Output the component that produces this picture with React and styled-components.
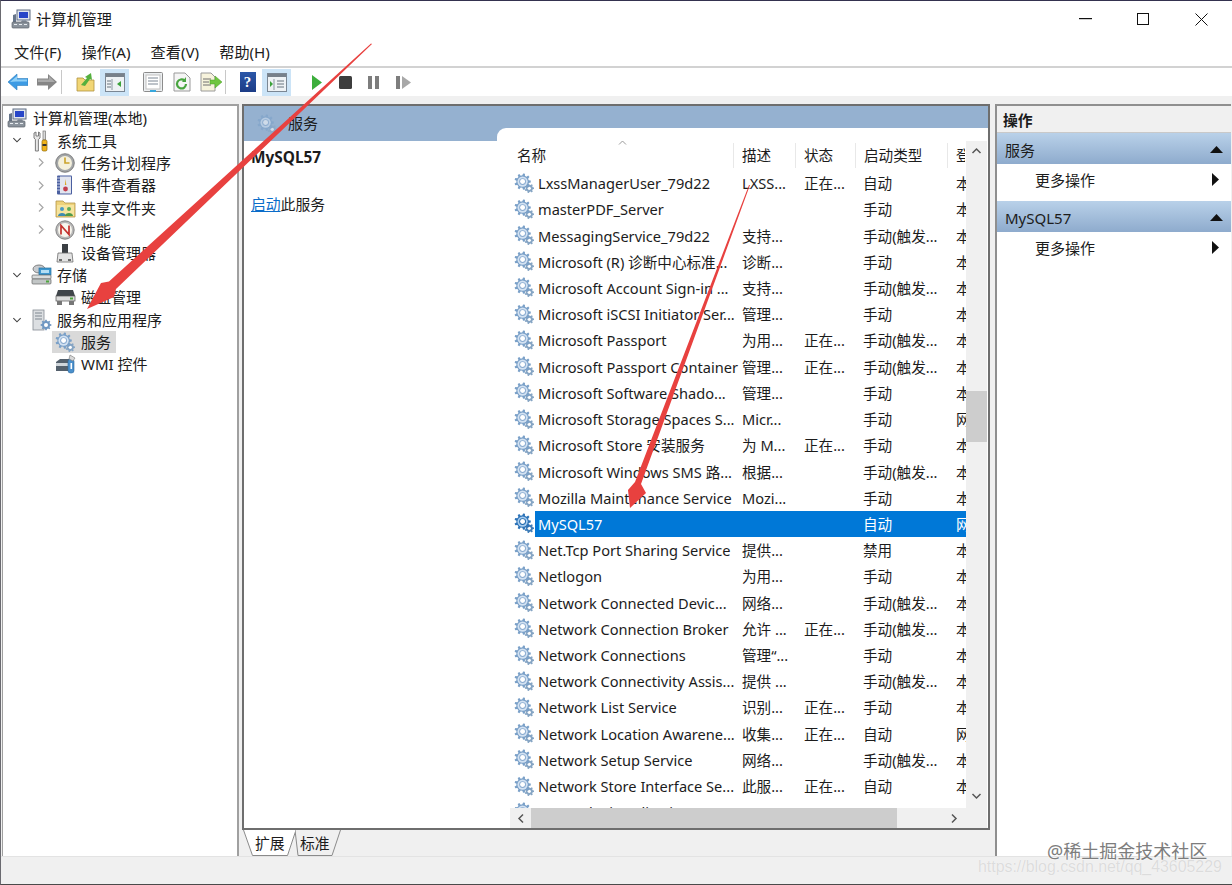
import React from "react";
import styled, { createGlobalStyle } from "styled-components";

const FONT = `"Noto Sans", "Noto Sans CJK SC", sans-serif`;

const Global = createGlobalStyle`
  html, body { margin: 0; padding: 0; background: #fff; }
  body { width: 1232px; height: 885px; overflow: hidden; font-family: ${FONT}; color: #1c1c1c; }
  * { box-sizing: border-box; }
`;

const Win = styled.div`
  position: relative; width: 1232px; height: 885px; display: flex; flex-direction: column;
  background: #fff; border-top: 1px solid #34324f; border-bottom: 1px solid #4a4a4a; border-left: 1px solid #6a6a70;
  overflow: hidden; font-size: 15.2px; line-height: 20px;
`;
const TitleBar = styled.div`
  height: 36px; display: flex; align-items: center; padding-left: 10px; flex: none;
`;
const TitleText = styled.span` margin-left: 5px; font-size: 15.2px; `;
const WinControls = styled.div` margin-left: auto; display: flex; padding-right: 2px; `;
const WinBtn = styled.div` width: 58px; height: 36px; display: flex; align-items: center; justify-content: center; `;
const MenuBar = styled.div`
  height: 28px; flex: none; display: flex; gap: 20px; padding: 1px 0 0 13px; align-items: center;
  font-size: 15.2px; border-bottom: 2px solid #d2d2d2; box-sizing: content-box;
`;
const Toolbar = styled.div`
  height: 28px; flex: none; display: flex; align-items: center; padding-left: 2px; background: #fff;
`;
const ToolBtn = styled.div`
  width: ${p => p.$w || 29}px; height: 27px; flex: none; display: flex; align-items: center; justify-content: center;
  margin-left: ${p => p.$ml || 0}px;
  background: ${p => (p.$on ? "#cce4f7" : "transparent")};
`;
const ToolSep = styled.div` width: 1px; height: 24px; background: #c8c8c8; flex: none; `;

const Main = styled.div`
  flex: 1; min-height: 0; background: #f0f0f0; padding: 8px 0 0 1px; display: flex; align-items: flex-start;
`;
const TreePane = styled.div`
  width: 237px; height: 752px; flex: none; background: #fff;
  border: 2px solid #a0a0a0; border-left-width: 1px; border-bottom: none; padding-top: 1px;
`;
const TreeRow = styled.div`
  height: 22.4px; display: flex; align-items: center; position: relative;
  padding-left: ${p => p.$indent}px; white-space: nowrap;
`;
const Chevron = styled.span`
  width: 10px; height: 14px; display: flex; align-items: center; justify-content: center;
  position: absolute; left: ${p => p.$x}px; top: 4px;
`;
const IconSlot = styled.span` width: 22px; flex: none; display: flex; align-items: center; justify-content: center; `;
const TreeLabel = styled.span`
  margin-left: 3px; padding: 0 2px; line-height: 22px; font-size: 15px;
`;
const SelectedTree = styled.div`
  display: flex; align-items: center; height: 22.4px; background: #d9d9d9; padding: 0 3px 0 2px; margin-left: -2px;
`;

const CenterCol = styled.div`
  width: 748px; margin-left: 3px; flex: none; display: flex; flex-direction: column;
`;
const CenterPane = styled.div`
  height: 726px; border: 2px solid #6e6e6e; background: #fff;
  display: flex; flex-direction: column; overflow: hidden;
`;
const PaneHead = styled.div`
  height: 35px; flex: none; background: #95b1d0; display: flex; align-items: flex-start; padding: 8px 0 0 13px;
  font-size: 15px;
`;
const PaneHeadLabel = styled.span` margin-left: 10px; line-height: 19px; `;
const PaneBody = styled.div` flex: 1; min-height: 0; display: flex; `;
const Desc = styled.div` width: 253px; flex: none; padding: 7px 0 0 7px; `;
const DescTitle = styled.div` font-weight: 700; font-size: 15.4px; line-height: 20px; `;
const DescLine = styled.div` margin-top: 26px; font-size: 14.8px; `;
const Link = styled.span` color: #0a6cc9; text-decoration: underline; `;

const ListArea = styled.div`
  flex: 1; min-width: 0; margin-top: -13px; background: #fff; border-top-left-radius: 9px;
  display: flex; flex-direction: column; position: relative; z-index: 1; overflow: hidden;
`;
const ListTop = styled.div` flex: 1; min-height: 0; display: flex; `;
const ListCols = styled.div` width: 469px; flex: none; display: flex; flex-direction: column; overflow: hidden; `;
const HeadRow = styled.div`
  height: 42px; flex: none; padding: 15px 0 0 14px; display: flex; position: relative; overflow: hidden;
`;
const HeadCell = styled.div`
  width: ${p => p.$w}px; flex: none; height: 25px; padding-left: ${p => p.$pl ?? 8}px; line-height: 24px;
  border-right: 1px solid ${p => (p.$noline ? "transparent" : "#e8e8e8")}; white-space: nowrap; overflow: hidden; font-size: 14.6px;
`;
const SortCaret = styled.span` position: absolute; left: 121px; top: 12px; display: flex; `;
const Rows = styled.div` flex: 1; min-height: 0; overflow: hidden; padding-left: 14px; `;
const Row = styled.div` height: 26.22px; display: flex; align-items: center; `;
const RowIcon = styled.div` width: 24px; flex: none; display: flex; align-items: center; padding-left: 3px; `;
const RowBody = styled.div`
  flex: 1; min-width: 0; height: 100%; display: grid; grid-template-columns: 206px 62px 60px 92px 11px; align-items: center;
  background: ${p => (p.$sel ? "#0078d7" : "transparent")}; color: ${p => (p.$sel ? "#fff" : "#1c1c1c")};
`;
const Cell = styled.div`
  padding-left: ${p => p.$pl ?? 1}px; white-space: nowrap; overflow: hidden; font-size: 14.6px; line-height: 26px;
`;
const VScroll = styled.div`
  width: 21px; flex: none; margin-top: 13px; background: #f0f0f0; position: relative;
  display: flex; flex-direction: column; align-items: center; padding: 6px 0 28px;
`;
const VThumb = styled.div`
  position: absolute; left: 0; right: 0; top: 250px; height: 51px; background: #cdcdcd;
`;
const DownSlot = styled.div` margin-top: auto; display: flex; `;
const HScroll = styled.div`
  height: 20px; flex: none; margin-left: 13px; margin-right: 0; background: #f0f0f0; display: flex; align-items: center;
`;
const HArrow = styled.div` width: 21px; flex: none; display: flex; align-items: center; justify-content: center; `;
const HThumb = styled.div` width: 366px; height: 20px; background: #cdcdcd; flex: none; `;
const HArrowRight = styled(HArrow)` margin-left: 46px; `;

const TabStrip = styled.div` height: 26px; display: flex; padding-left: 1px; `;
const Tab = styled.div`
  position: relative; width: ${p => p.$w}px; height: 26px; margin-left: ${p => p.$ml || 0}px; flex: none;
  padding-left: ${p => p.$pl}px; line-height: 26px; font-size: 14.8px;
`;
const TabShape = styled.svg` position: absolute; left: 0; top: 0; z-index: 0; `;
const TabText = styled.span` position: relative; `;

const ActionPane = styled.div`
  width: 236px; margin-left: 5px; height: 752px; flex: none; background: #fff;
  border-top: 2px solid #8f8f8f; border-left: 2px solid #8f8f8f;
`;
const ActionTitle = styled.div`
  height: 26px; background: #f0f0f0; font-weight: 700; padding-left: 6px; line-height: 28px; font-size: 14.8px;
  border-bottom: 1px solid #c9c9c9; box-sizing: content-box;
`;
const ActionHead = styled.div`
  height: 31px; display: flex; align-items: center; justify-content: space-between; padding: 2px 8px 0 8px;
  background: linear-gradient(#b9d1e9, #8eabcd); font-size: 15px;
`;
const ActionItem = styled.div`
  height: 33px; display: flex; align-items: center; justify-content: space-between;
  padding: 0 12px 2px 38px; margin-bottom: ${p => p.$mb || 0}px; font-size: 15px;
`;
const StatusBar = styled.div` height: 28px; flex: none; background: #f0f0f0; border-top: 1px solid #e3e3e3; position: relative; z-index: 2; `;

const Overlay = styled.svg` position: absolute; left: -1px; top: -1px; z-index: 5; pointer-events: none; `;
const Mark1 = styled.div`
  position: absolute; left: 1046px; top: 838px; z-index: 6; font-size: 18px; line-height: 24px; color: #7d7d7d; white-space: nowrap;
  text-shadow: 0 0 2px #fff, 0 0 1px #fff;
`;
const Mark2 = styled.div`
  position: absolute; left: 977px; top: 856px; z-index: 6; font-family: "Liberation Sans", sans-serif; font-size: 15.9px; line-height: 20px; color: #dcdcdc; white-space: nowrap;
  text-shadow: 0 0 1px #fff;
`;

/* ---------- icons ---------- */
function gearPath(cx, cy, r, teeth) {
  const pts = [];
  const ro = r, ri = r * 0.76;
  for (let i = 0; i < teeth; i++) {
    const a = (i / teeth) * Math.PI * 2, s = (Math.PI * 2) / teeth;
    [[-0.3, ri], [-0.17, ro], [0.17, ro], [0.3, ri]].forEach(([k, rr]) => {
      pts.push(`${(cx + rr * Math.cos(a + k * s)).toFixed(2)},${(cy + rr * Math.sin(a + k * s)).toFixed(2)}`);
    });
  }
  return pts.join(" ");
}
const G1 = gearPath(9, 9, 8.6, 9);
const G2 = gearPath(16, 16, 5, 7);

const Gear = ({ size = 22, strong, faint }) => (
  <svg width={size} height={size} viewBox="0 0 22 22" style={{ opacity: faint ? 0.55 : 1, flex: "none" }}>
    <polygon points={G2} fill={strong ? "#3f7db8" : "#86a5c4"} />
    <circle cx="16" cy="16" r="1.7" fill="#fff" />
    <polygon points={G1} fill={strong ? "#2d73b8" : "#7aa0c8"} />
    <circle cx="9" cy="9" r="5.4" fill={strong ? "#a8cdef" : "#d3e2f2"} />
    <circle cx="9" cy="9" r="3.6" fill={strong ? "#1f68ad" : "#8aabd0"} />
    <circle cx="9" cy="9" r="2.6" fill="#fff" />
  </svg>
);
const Computer = ({ size = 20 }) => (
  <svg width={size} height={size} viewBox="0 0 20 20" style={{ flex: "none" }}>
    <rect x="6" y="1" width="13" height="10" fill="#dfe5ee" stroke="#5f6d82" />
    <rect x="8" y="3" width="9" height="6" fill="#2746c8" />
    <path d="M11 11h4l1 2h-6z" fill="#8c96a4" />
    <path d="M2 6l3-1v8H2z" fill="#66758a" />
    <rect x="1" y="13" width="17" height="6" rx="1" fill="#8b939c" stroke="#5c636b" strokeWidth=".7" />
    <path d="M3 15.5h3M8 15.5h3M13 15.5h3" stroke="#e9edf1" />
  </svg>
);
const Tools = () => (
  <svg width="20" height="22" viewBox="0 0 20 22" style={{ flex: "none" }}>
    <path d="M3 3v5l1.4 1.5V21h3V9.5L9 8V3L7.500 2v4h-2.500V2z" fill="#e8e8e8" stroke="#6f6f6f" strokeWidth=".9" />
    <rect x="12" y="1" width="2.600" height="9" fill="#d9d9d9" stroke="#777" strokeWidth=".7" />
    <rect x="11" y="10" width="5" height="11" rx="1.500" fill="#f0b41c" stroke="#8a6508" strokeWidth=".7" />
    <rect x="11.500" y="14" width="4" height="2" fill="#333" />
  </svg>
);
const Clock = () => (
  <svg width="20" height="20" viewBox="0 0 20 20" style={{ flex: "none" }}>
    <circle cx="10" cy="10" r="9.300" fill="#a3a6a8" stroke="#6c6c6c" strokeWidth=".8" />
    <circle cx="10" cy="10" r="7" fill="#f4f0dc" />
    <path d="M10 4.500V10h4.500" fill="none" stroke="#caa22a" strokeWidth="1.600" />
  </svg>
);
const EventBook = () => (
  <svg width="20" height="20" viewBox="0 0 20 20" style={{ flex: "none" }}>
    <rect x="2" y="0.500" width="15" height="19" rx="1" fill="#4a5fa0" />
    <rect x="5" y="1.500" width="11" height="17" fill="#e2e5ef" />
    <path d="M2 3h3M2 6h3M2 9h3M2 12h3M2 15h3" stroke="#c8d0e6" />
    <path d="M10.500 4l-.6 6h1.400z" fill="#dca41c" />
    <circle cx="10.500" cy="14" r="2.400" fill="#c23d4d" />
  </svg>
);
const SharedFolder = () => (
  <svg width="21" height="20" viewBox="0 0 21 20" style={{ flex: "none" }}>
    <path d="M1 3h7l2 2h10v14H1z" fill="#eed27a" stroke="#b2944a" strokeWidth=".8" />
    <rect x="2" y="7" width="17" height="11" fill="#f6e49e" />
    <circle cx="7" cy="11" r="2" fill="#4a9ac4" />
    <path d="M3 18c0-4 8-4 8 0z" fill="#3e8ab0" />
    <circle cx="14" cy="11" r="2" fill="#5cab58" />
    <path d="M10 18c0-4 8-4 8 0z" fill="#4d9a4a" />
  </svg>
);
const Perf = () => (
  <svg width="20" height="20" viewBox="0 0 20 20" style={{ flex: "none" }}>
    <circle cx="10" cy="10" r="9.200" fill="#b8b8b8" stroke="#707070" strokeWidth=".8" />
    <circle cx="10" cy="10" r="7" fill="#f8f6ee" />
    <path d="M6 14.500V5.500l8 9V5.500" fill="none" stroke="#c4302c" strokeWidth="1.700" />
  </svg>
);
const Device = () => (
  <svg width="20" height="20" viewBox="0 0 20 20" style={{ flex: "none" }}>
    <rect x="7" y="1" width="6" height="9" fill="#3b3f44" />
    <path d="M3 10h14l1 9H2z" fill="#e4e4e4" stroke="#6d6d6d" strokeWidth=".8" />
    <rect x="4" y="16" width="3" height="2" fill="#6d6d6d" />
    <rect x="13" y="16" width="3" height="2" fill="#6d6d6d" />
  </svg>
);
const Storage = () => (
  <svg width="21" height="21" viewBox="0 0 21 21" style={{ flex: "none" }}>
    <ellipse cx="8" cy="5" rx="6" ry="4" fill="#c7cbcf" stroke="#666" strokeWidth=".8" />
    <rect x="8" y="4" width="12" height="7" fill="#3d97cf" stroke="#2a6f9c" strokeWidth=".7" />
    <rect x="10" y="6" width="8" height="3" fill="#b3def4" />
    <rect x="1" y="11" width="19" height="4" rx="1" fill="#d9dcdc" stroke="#666" strokeWidth=".7" />
    <rect x="1" y="15" width="19" height="5" rx="1" fill="#c2c6c6" stroke="#666" strokeWidth=".7" />
    <rect x="15" y="16.500" width="3" height="2" fill="#4ea53d" />
  </svg>
);
const Disk = () => (
  <svg width="21" height="20" viewBox="0 0 21 20" style={{ flex: "none" }}>
    <path d="M3 3h15l2 6H1z" fill="#40454a" />
    <rect x="1" y="9" width="19" height="5" fill="#dcdcdc" stroke="#555" strokeWidth=".7" />
    <rect x="15" y="10.500" width="3" height="2" fill="#4ea53d" />
    <rect x="2" y="14" width="5" height="4" fill="#777" />
    <rect x="14" y="14" width="5" height="4" fill="#777" />
  </svg>
);
const AppServer = () => (
  <svg width="21" height="22" viewBox="0 0 21 22" style={{ flex: "none" }}>
    <rect x="2" y="1" width="11" height="20" fill="#dcdfe2" stroke="#848b93" strokeWidth=".8" />
    <path d="M4 4h7M4 7h7M4 10h7" stroke="#7f8790" />
    <polygon points={gearPath(15, 16, 5.400, 8)} fill="#6f97c2" />
    <circle cx="15" cy="16" r="2" fill="#fff" />
  </svg>
);
const Wmi = () => (
  <svg width="21" height="20" viewBox="0 0 21 20" style={{ flex: "none" }}>
    <path d="M1 8l4-3h9v12H1z" fill="#54606c" />
    <rect x="1" y="9" width="13" height="3" fill="#cfd5da" />
    <rect x="13" y="5" width="6" height="14" rx="2.500" fill="#4a90cc" stroke="#2a659c" strokeWidth=".6" />
    <path d="M15 1l5 3-2 3-4-2z" fill="#d8d8d8" stroke="#777" strokeWidth=".6" />
    <rect x="15.500" y="9" width="1.600" height="6" fill="#fff" />
  </svg>
);

const ChevRight = () => (
  <svg width="8" height="11" viewBox="0 0 8 11"><path d="M2 1.500l4 4-4 4" fill="none" stroke="#a6a6a6" strokeWidth="1.200" /></svg>
);
const ChevDown = () => (
  <svg width="11" height="8" viewBox="0 0 11 8"><path d="M1.500 2l4 4 4-4" fill="none" stroke="#404040" strokeWidth="1.200" /></svg>
);
const Caret = ({ d, color = "#555" }) => (
  <svg width="11" height="8" viewBox="0 0 11 8" style={{ flex: "none" }}>
    <path d={d === "up" ? "M1.500 6l4-4 4 4" : "M1.500 2l4 4 4-4"} fill="none" stroke={color} strokeWidth="1.500" />
  </svg>
);
const CaretH = ({ d }) => (
  <svg width="8" height="11" viewBox="0 0 8 11" style={{ flex: "none" }}>
    <path d={d === "l" ? "M6 1.500l-4 4 4 4" : "M2 1.500l4 4-4 4"} fill="none" stroke="#555" strokeWidth="1.500" />
  </svg>
);
const TriUp = () => <svg width="13" height="7" viewBox="0 0 13 7" style={{ flex: "none" }}><path d="M0 7L6.500 0 13 7z" fill="#111" /></svg>;
const TriRight = () => <svg width="7" height="13" viewBox="0 0 7 13" style={{ flex: "none" }}><path d="M0 0l7 6.500L0 13z" fill="#111" /></svg>;

/* toolbar icons */
const IconBack = () => (
  <svg width="20" height="18" viewBox="0 0 20 18"><path d="M0 9l9-8v4.500h11v7H9V17z" fill="#3d9be4" stroke="#2f7fbf" strokeWidth=".6" /><path d="M2 9l7-6v3.500h10v2H8z" fill="#8fd0f7" /></svg>
);
const IconForward = () => (
  <svg width="20" height="18" viewBox="0 0 20 18"><path d="M20 9l-9-8v4.500H0v7h11V17z" fill="#868686" /><path d="M1 6.500h11V3l6 6H1z" fill="#aaa" /></svg>
);
const IconUp = () => (
  <svg width="19" height="20" viewBox="0 0 19 20">
    <path d="M1 6h6l2 2h9v11H1z" fill="#f2d675" stroke="#b0923f" strokeWidth=".8" />
    <path d="M5 13l6-7-2-1 6-4 1 7-2-1-5 7z" fill="#55b03e" />
  </svg>
);
const IconPane = ({ right }) => (
  <svg width="20" height="19" viewBox="0 0 20 19">
    <rect x=".5" y=".5" width="19" height="18" fill="#eef2f5" stroke="#7b8794" />
    <rect x="1" y="1" width="18" height="3" fill="#77808a" />
    <path d="M7 6v11" stroke="#8a96a2" />
    <path d={right ? "M3 8l3 3-3 3z" : "M16 8l-4 3 4 3z"} fill="#3ba23a" />
    {right ? <path d="M10 8h7M10 11h7M10 14h7" stroke="#68747f" /> : <path d="M2 8h4M2 11h4M2 14h4" stroke="#68747f" />}
  </svg>
);
const IconProps = () => (
  <svg width="20" height="21" viewBox="0 0 20 21">
    <rect x=".5" y=".5" width="19" height="19" rx="1" fill="#eceff1" stroke="#8c8c8c" />
    <rect x="3" y="3" width="14" height="14" fill="#fff" stroke="#c0c0c0" />
    <path d="M5 6h10M5 9h10M5 12h10" stroke="#7c8794" />
    <rect x="7" y="18" width="6" height="2" fill="#38a7dc" />
  </svg>
);
const IconRefresh = () => (
  <svg width="18" height="20" viewBox="0 0 18 20">
    <path d="M1 1h11l5 5v13H1z" fill="#f5f5f5" stroke="#9a9a9a" />
    <path d="M13 12a4.500 4.500 0 1 1-1.500-3.400" fill="none" stroke="#49a540" strokeWidth="2.200" />
    <path d="M13 5v5H9z" fill="#49a540" />
  </svg>
);
const IconExport = () => (
  <svg width="22" height="20" viewBox="0 0 22 20">
    <path d="M1 1h10l4 4v14H1z" fill="#f7f3dc" stroke="#9a9a9a" />
    <path d="M3 7h8M3 10h6M3 13h8" stroke="#6f6f6f" />
    <path d="M10 8h5V4l7 6-7 6v-4h-5z" fill="#6fc63e" stroke="#4a9c28" strokeWidth=".5" />
  </svg>
);
const IconHelpBox = styled.div`
  width: 16px; height: 20px; background: linear-gradient(#2b57a8, #1c3c86); color: #fff; font: 700 15px/20px "Liberation Serif", serif;
  text-align: center;
`;
const IconPlay = () => <svg width="10" height="15" viewBox="0 0 10 15"><path d="M0 0l10 7.500L0 15z" fill="#3cae3c" /></svg>;
const IconStop = () => <svg width="13" height="13" viewBox="0 0 13 13"><rect width="13" height="13" rx="1.500" fill="#3d3d3d" /></svg>;
const IconPause = () => <svg width="11" height="13" viewBox="0 0 11 13"><rect width="4" height="13" fill="#7d7d7d" /><rect x="7" width="4" height="13" fill="#7d7d7d" /></svg>;
const IconResume = () => <svg width="15" height="13" viewBox="0 0 15 13"><rect width="4" height="13" fill="#7d7d7d" /><path d="M6 0l9 6.500L6 13z" fill="#a8a8a8" /></svg>;

const Min = () => <svg width="13" height="2" viewBox="0 0 13 2"><rect width="13" height="1.200" fill="#111" /></svg>;
const Max = () => <svg width="12" height="12" viewBox="0 0 12 12"><rect x=".5" y=".5" width="11" height="11" fill="none" stroke="#111" /></svg>;
const Close = () => <svg width="13" height="13" viewBox="0 0 13 13"><path d="M.5.5l12 12M12.500.5l-12 12" stroke="#111" strokeWidth="1" /></svg>;

/* ---------- data ---------- */
const TREE = [
  { depth: 0, label: "计算机管理(本地)", icon: <Computer /> },
  { depth: 1, open: true, label: "系统工具", icon: <Tools /> },
  { depth: 2, more: true, label: "任务计划程序", icon: <Clock /> },
  { depth: 2, more: true, label: "事件查看器", icon: <EventBook /> },
  { depth: 2, more: true, label: "共享文件夹", icon: <SharedFolder /> },
  { depth: 2, more: true, label: "性能", icon: <Perf /> },
  { depth: 2, label: "设备管理器", icon: <Device /> },
  { depth: 1, open: true, label: "存储", icon: <Storage /> },
  { depth: 2, label: "磁盘管理", icon: <Disk /> },
  { depth: 1, open: true, label: "服务和应用程序", icon: <AppServer /> },
  { depth: 2, label: "服务", sel: true, icon: <Gear size={21} /> },
  { depth: 2, label: "WMI 控件", icon: <Wmi /> },
];
const INDENT = [3, 27, 51];
const CHEV = [0, 9, 33];

const SERVICES = [
  ["LxssManagerUser_79d22", "LXSS...", "正在...", "自动", "本"],
  ["masterPDF_Server", "", "", "手动", "本"],
  ["MessagingService_79d22", "支持...", "", "手动(触发...", "本"],
  ["Microsoft (R) 诊断中心标准...", "诊断...", "", "手动", "本"],
  ["Microsoft Account Sign-in ...", "支持...", "", "手动(触发...", "本"],
  ["Microsoft iSCSI Initiator Ser...", "管理...", "", "手动", "本"],
  ["Microsoft Passport", "为用...", "正在...", "手动(触发...", "本"],
  ["Microsoft Passport Container", "管理...", "正在...", "手动(触发...", "本"],
  ["Microsoft Software Shado...", "管理...", "", "手动", "本"],
  ["Microsoft Storage Spaces S...", "Micr...", "", "手动", "网"],
  ["Microsoft Store 安装服务", "为 M...", "正在...", "手动", "本"],
  ["Microsoft Windows SMS 路...", "根据...", "", "手动(触发...", "本"],
  ["Mozilla Maintenance Service", "Mozi...", "", "手动", "本"],
  ["MySQL57", "", "", "自动", "网"],
  ["Net.Tcp Port Sharing Service", "提供...", "", "禁用", "本"],
  ["Netlogon", "为用...", "", "手动", "本"],
  ["Network Connected Devic...", "网络...", "", "手动(触发...", "本"],
  ["Network Connection Broker", "允许 ...", "正在...", "手动(触发...", "本"],
  ["Network Connections", "管理“...", "", "手动", "本"],
  ["Network Connectivity Assis...", "提供 ...", "", "手动(触发...", "本"],
  ["Network List Service", "识别...", "正在...", "手动", "本"],
  ["Network Location Awarene...", "收集...", "正在...", "自动", "网"],
  ["Network Setup Service", "网络...", "", "手动(触发...", "本"],
  ["Network Store Interface Se...", "此服...", "正在...", "自动", "本"],
  ["Network Virtualization Se...", "", "", "", ""],
];

export default function App() {
  return (
    <Win>
      <Global />
      <TitleBar>
        <Computer size={20} />
        <TitleText>计算机管理</TitleText>
        <WinControls>
          <WinBtn><Min /></WinBtn>
          <WinBtn><Max /></WinBtn>
          <WinBtn><Close /></WinBtn>
        </WinControls>
      </TitleBar>
      <MenuBar>
        <span>文件(F)</span><span>操作(A)</span><span>查看(V)</span><span>帮助(H)</span>
      </MenuBar>
      <Toolbar>
        <ToolBtn><IconBack /></ToolBtn>
        <ToolBtn><IconForward /></ToolBtn>
        <ToolSep />
        <ToolBtn $ml={9}><IconUp /></ToolBtn>
        <ToolBtn $on><IconPane /></ToolBtn>
        <ToolBtn $ml={9}><IconProps /></ToolBtn>
        <ToolBtn><IconRefresh /></ToolBtn>
        <ToolBtn><IconExport /></ToolBtn>
        <ToolSep />
        <ToolBtn $ml={7}><IconHelpBox>?</IconHelpBox></ToolBtn>
        <ToolBtn $on><IconPane right /></ToolBtn>
        <ToolBtn $ml={12} $w={28}><IconPlay /></ToolBtn>
        <ToolBtn $w={28}><IconStop /></ToolBtn>
        <ToolBtn $w={28}><IconPause /></ToolBtn>
        <ToolBtn $w={28} $ml={2}><IconResume /></ToolBtn>
      </Toolbar>
      <Main>
        <TreePane>
          {TREE.map((t) => (
            <TreeRow key={t.label} $indent={INDENT[t.depth]}>
              {t.more && <Chevron $x={CHEV[t.depth]}><ChevRight /></Chevron>}
              {t.open && <Chevron $x={CHEV[t.depth]}><ChevDown /></Chevron>}
              {t.sel ? (
                <SelectedTree>
                  <IconSlot>{t.icon}</IconSlot>
                  <TreeLabel>{t.label}</TreeLabel>
                </SelectedTree>
              ) : (
                <>
                  <IconSlot>{t.icon}</IconSlot>
                  <TreeLabel>{t.label}</TreeLabel>
                </>
              )}
            </TreeRow>
          ))}
        </TreePane>
        <CenterCol>
          <CenterPane>
            <PaneHead>
              <Gear size={21} faint />
              <PaneHeadLabel>服务</PaneHeadLabel>
            </PaneHead>
            <PaneBody>
              <Desc>
                <DescTitle>MySQL57</DescTitle>
                <DescLine><Link>启动</Link>此服务</DescLine>
              </Desc>
              <ListArea>
                <ListTop>
                  <ListCols>
                    <HeadRow>
                      <SortCaret><svg width="9" height="5" viewBox="0 0 9 5"><path d="M1 4.500l3.500-3.500 3.500 3.500" fill="none" stroke="#9a9a9a" /></svg></SortCaret>
                      <HeadCell $w={223} $pl={6}>名称</HeadCell>
                      <HeadCell $w={62}>描述</HeadCell>
                      <HeadCell $w={60}>状态</HeadCell>
                      <HeadCell $w={92}>启动类型</HeadCell>
                      <HeadCell $w={18} $noline>登录为</HeadCell>
                    </HeadRow>
                    <Rows>
                      {SERVICES.map((s) => {
                        const sel = s[0] === "MySQL57";
                        return (
                          <Row key={s[0]}>
                            <RowIcon><Gear size={21} strong={sel} /></RowIcon>
                            <RowBody $sel={sel}>
                              <Cell $pl={3}>{s[0]}</Cell>
                              <Cell>{s[1]}</Cell>
                              <Cell>{s[2]}</Cell>
                              <Cell $pl={0}>{s[3]}</Cell>
                              <Cell>{s[4]}</Cell>
                            </RowBody>
                          </Row>
                        );
                      })}
                    </Rows>
                    <HScroll>
                      <HArrow><CaretH d="l" /></HArrow>
                      <HThumb />
                      <HArrowRight><CaretH d="r" /></HArrowRight>
                    </HScroll>
                  </ListCols>
                  <VScroll>
                    <VThumb />
                    <Caret d="up" />
                    <DownSlot><Caret d="down" /></DownSlot>
                  </VScroll>
                </ListTop>
              </ListArea>
            </PaneBody>
          </CenterPane>
          <TabStrip>
            <Tab $w={52} $pl={12}>
              <TabShape width="54" height="26" viewBox="0 0 54 26">
                <path d="M.5 0l9 25.500h35L53 0" fill="#fff" stroke="#8a8a8a" />
              </TabShape>
              <TabText>扩展</TabText>
            </Tab>
            <Tab $w={46} $pl={5}>
              <TabShape width="46" height="26" viewBox="0 0 46 26">
                <path d="M0 0l3 25.500h34L45.500 0" fill="#f0f0f0" stroke="#8a8a8a" />
              </TabShape>
              <TabText>标准</TabText>
            </Tab>
          </TabStrip>
        </CenterCol>
        <ActionPane>
          <ActionTitle>操作</ActionTitle>
          <ActionHead>服务<TriUp /></ActionHead>
          <ActionItem $mb={4}>更多操作<TriRight /></ActionItem>
          <ActionHead>MySQL57<TriUp /></ActionHead>
          <ActionItem>更多操作<TriRight /></ActionItem>
        </ActionPane>
      </Main>
      <StatusBar />
      <Overlay width="1232" height="885" viewBox="0 0 1232 885">
        <polygon points="372,44 116,289 114,297 87,309 101,283 109,281.500 371,43.500" fill="#e8413f" />
        <polygon points="750,185 641,484 646,493 630,508 628,490 635,482 749,185" fill="#e8413f" />
      </Overlay>
      <Mark1>@稀土掘金技术社区</Mark1>
      <Mark2>https://blog.csdn.net/qq_43605229</Mark2>
    </Win>
  );
}
